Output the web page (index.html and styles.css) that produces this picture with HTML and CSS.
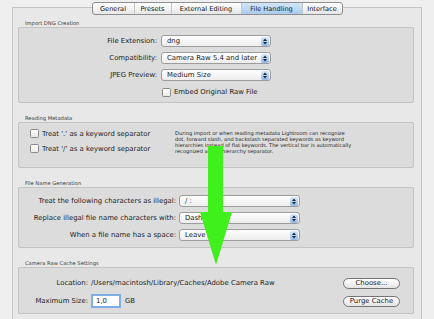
FILE: index.html
```html
<!DOCTYPE html>
<html>
<head>
<meta charset="utf-8">
<link rel="stylesheet" href="styles.css">
</head>
<body>
<div class="panel">
  <div class="tabs">
    <span class="tab t1">General</span>
    <span class="tab t2">Presets</span>
    <span class="tab t3">External Editing</span>
    <span class="tab t4 sel">File Handling</span>
    <span class="tab t5">Interface</span>
  </div>

  <div class="legend first">Import DNG Creation</div>
  <div class="group g1">
    <div class="form f1">
      <span class="lbl">File Extension:</span>
      <span class="popup"><span class="val">dng</span><span class="step"><svg width="8" height="9" viewBox="0 0 8 9"><path d="M2 4 L4 1.5 L6 4 Z M2 5 L4 7.5 L6 5 Z" fill="#1c2a40"/></svg></span></span>
      <span class="lbl">Compatibility:</span>
      <span class="popup"><span class="val">Camera Raw 5.4 and later</span><span class="step"><svg width="8" height="9" viewBox="0 0 8 9"><path d="M2 4 L4 1.5 L6 4 Z M2 5 L4 7.5 L6 5 Z" fill="#1c2a40"/></svg></span></span>
      <span class="lbl">JPEG Preview:</span>
      <span class="popup"><span class="val">Medium Size</span><span class="step"><svg width="8" height="9" viewBox="0 0 8 9"><path d="M2 4 L4 1.5 L6 4 Z M2 5 L4 7.5 L6 5 Z" fill="#1c2a40"/></svg></span></span>
      <span></span>
      <span class="check"><span class="box"></span>Embed Original Raw File</span>
    </div>
  </div>

  <div class="legend">Reading Metadata</div>
  <div class="group g2">
    <div class="checks">
      <span class="check"><span class="box"></span>Treat '.' as a keyword separator</span>
      <span class="check"><span class="box"></span>Treat '/' as a keyword separator</span>
    </div>
    <p class="desc">During import or when reading metadata Lightroom can recognize<br>dot, forward slash, and backslash separated keywords as keyword<br>hierarchies instead of flat keywords. The vertical bar is automatically<br>recognized as the hierarchy separator.</p>
  </div>

  <div class="legend">File Name Generation</div>
  <div class="group g3">
    <div class="form f3">
      <span class="lbl">Treat the following characters as illegal:</span>
      <span class="popup"><span class="val">/ :</span><span class="step"><svg width="8" height="9" viewBox="0 0 8 9"><path d="M2 4 L4 1.5 L6 4 Z M2 5 L4 7.5 L6 5 Z" fill="#1c2a40"/></svg></span></span>
      <span class="lbl">Replace illegal file name characters with:</span>
      <span class="popup"><span class="val">Dashes (-)</span><span class="step"><svg width="8" height="9" viewBox="0 0 8 9"><path d="M2 4 L4 1.5 L6 4 Z M2 5 L4 7.5 L6 5 Z" fill="#1c2a40"/></svg></span></span>
      <span class="lbl">When a file name has a space:</span>
      <span class="popup"><span class="val">Leave As-Is</span><span class="step"><svg width="8" height="9" viewBox="0 0 8 9"><path d="M2 4 L4 1.5 L6 4 Z M2 5 L4 7.5 L6 5 Z" fill="#1c2a40"/></svg></span></span>
    </div>
  </div>

  <div class="legend">Camera Raw Cache Settings</div>
  <div class="group g4">
    <div class="form f4">
      <span class="lbl">Location:</span>
      <span class="path">/Users/macintosh/Library/Caches/Adobe Camera Raw</span>
      <span class="btn">Choose...</span>
      <span class="lbl">Maximum Size:</span>
      <span class="size"><span class="input">1,0</span>GB</span>
      <span class="btn">Purge Cache</span>
    </div>
  </div>
</div>

<svg class="arrow" width="32" height="120" viewBox="0 0 32 120">
  <path d="M8 0 H23 V66 H32 L16 119 L0 66 H8 Z" fill="#3ff01c"/>
</svg>
</body>
</html>
```

FILE: styles.css
```css
html, body {
  margin: 0;
  padding: 0;
}
body {
  width: 434px;
  height: 319px;
  overflow: hidden;
  background: #efefef;
  font-family: "DejaVu Sans", "Liberation Sans", sans-serif;
  color: #1b1b1b;
  position: relative;
}
.panel {
  margin: 7px 0 0 12px;
  width: 410px;
  height: 312px;
  box-sizing: border-box;
  border: 1px solid #c4c4c4;
  border-bottom: none;
  background: #e8e8e8;
}
.tabs {
  display: flex;
  width: 251px;
  height: 13px;
  margin: -6px auto 0;
  box-sizing: border-box;
  border: 1px solid #8f8f8f;
  border-radius: 3px;
  background: linear-gradient(#ffffff, #e6e6e6);
  font-size: 6.6px;
  overflow: hidden;
}
.tab {
  display: flex;
  align-items: center;
  justify-content: center;
  border-right: 1px solid #c8c8c8;
  color: #111;
}
.tab:last-child { border-right: none; }
.t1 { width: 41px; }
.t2 { width: 36px; }
.t3 { width: 69px; }
.t4 { width: 60px; }
.t5 { flex: 1; }
.tab.sel {
  background: linear-gradient(#d4e6f8, #a9cbef);
  color: #0c1e3a;
}
.legend {
  height: 7px;
  line-height: 7px;
  margin-top: 12px;
  padding-left: 12px;
  font-size: 5.2px;
  color: #3a3a3a;
}
.legend.first { margin-top: 5px; }
.group {
  margin: 0 7px 0 5px;
  box-sizing: border-box;
  border: 1px solid #c3c3c3;
  border-radius: 2px;
  background: #dcdcdc;
}
.g1 { height: 76px; padding-top: 7px; }
.g2 { height: 46px; display: flex; padding-top: 6px; }
.g3 { height: 61px; padding-top: 7px; }
.g4 { height: 47px; padding-top: 9px; }

.form {
  display: grid;
  align-items: center;
  font-size: 6.9px;
}
.f1 {
  grid-template-columns: 138px 110px;
  grid-auto-rows: 12px;
  column-gap: 4px;
  row-gap: 5px;
}
.f3 {
  grid-template-columns: 157px 121px;
  grid-auto-rows: 12px;
  column-gap: 3px;
  row-gap: 5px;
}
.f4 {
  grid-template-columns: 69px 1fr 57px;
  grid-template-rows: 12px 14px;
  column-gap: 3px;
  row-gap: 5px;
  padding-right: 13px;
}
.lbl {
  text-align: right;
  white-space: nowrap;
}
.popup {
  display: flex;
  align-items: center;
  justify-content: space-between;
  height: 12px;
  box-sizing: border-box;
  border: 1px solid #9d9d9d;
  border-radius: 3px;
  background: linear-gradient(#ffffff, #ededed);
  padding-left: 5px;
  white-space: nowrap;
}
.step {
  display: flex;
  width: 8px;
  height: 9px;
  margin-right: 1px;
  border-radius: 2px;
  background: linear-gradient(#d9e9fa, #8fb8e8);
}
.check {
  display: flex;
  align-items: center;
  white-space: nowrap;
}
.box {
  width: 7px;
  height: 7px;
  margin-right: 3px;
  border: 1px solid #8a8a8a;
  border-radius: 1.5px;
  background: linear-gradient(#ffffff, #e9e9e9);
}
.f1 .check { margin-left: 1px; }
.checks {
  display: flex;
  flex-direction: column;
  row-gap: 6px;
  padding-left: 11px;
  width: 145px;
  font-size: 6.9px;
}
.checks .check { height: 9px; }
.desc {
  margin: 0;
  padding-top: 1px;
  font-size: 5.1px;
  line-height: 6px;
  color: #1d1d1d;
}
.path { white-space: nowrap; }
.size {
  display: flex;
  align-items: center;
  column-gap: 4px;
}
.input {
  width: 30px;
  height: 14px;
  box-sizing: border-box;
  border: 2px solid #7faee6;
  background: #fff;
  padding-left: 3px;
  line-height: 10px;
}
.btn {
  display: flex;
  align-items: center;
  justify-content: center;
  height: 11px;
  box-sizing: border-box;
  border: 1px solid #747474;
  border-radius: 6px;
  background: linear-gradient(#ffffff, #e4e4e4);
  white-space: nowrap;
}
.arrow {
  position: absolute;
  left: 200px;
  top: 146px;
}
```
